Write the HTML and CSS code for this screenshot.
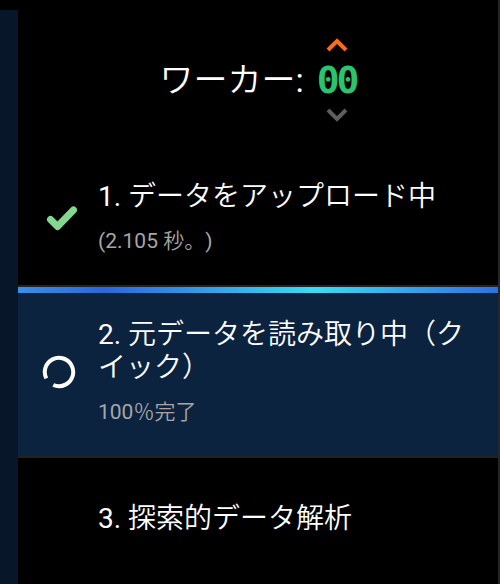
FILE: index.html
```html
<!DOCTYPE html>
<html lang="ja">
<head>
  <meta charset="UTF-8" />
  <meta name="viewport" content="width=device-width, initial-scale=1.0"/>
  <title>ワーカー</title>
  <link rel="stylesheet" href="styles.css">
</head>
<body>
  <div class="app">
    <aside class="rail"></aside>
    <main class="panel">
      <header class="workers">
        <span class="workers-label">ワーカー:</span>
        <div class="counter">
          <svg class="chev chev-up" viewBox="0 0 22 14"><polyline points="2,12 11,3 20,12" /></svg>
          <span class="count">00</span>
          <svg class="chev chev-down" viewBox="0 0 22 14"><polyline points="2,2 11,11 20,2" /></svg>
        </div>
      </header>

      <div class="step step-done">
        <div class="step-icon">
          <svg class="check" viewBox="0 0 32 26"><polyline points="4.5,14.5 11.5,21.5 27.5,5" /></svg>
        </div>
        <div class="step-body">
          <div class="step-title">1. データをアップロード中</div>
          <div class="step-meta">(2.105 秒。)</div>
        </div>
      </div>

      <div class="progress"></div>

      <div class="step step-active">
        <div class="step-icon">
          <svg class="spinner" viewBox="0 0 34 34"><circle cx="17" cy="17" r="14.2" transform="rotate(153 17 17)" /></svg>
        </div>
        <div class="step-body">
          <div class="step-title">2. 元データを読み取り中（クイック）</div>
          <div class="step-meta">100％完了</div>
        </div>
      </div>

      <div class="step step-pending">
        <div class="step-icon"></div>
        <div class="step-body">
          <div class="step-title">3. 探索的データ解析</div>
        </div>
      </div>
    </main>
  </div>
</body>
</html>
```

FILE: styles.css
```css
body {
  margin: 0;
  background: #000;
  color: #fff;
  font-family: Roboto, "Noto Sans CJK JP DemiLight", "Noto Sans CJK JP", sans-serif;
  text-spacing-trim: space-all;
}
.app {
  display: flex;
  height: 100vh;
}
.rail {
  width: 18px;
  margin-top: 10px;
  background: #071628;
}
.panel {
  flex: 1;
  display: flex;
  flex-direction: column;
  border-right: 2px solid #262626;
}

/* worker counter */
.workers {
  display: flex;
  justify-content: center;
  align-items: center;
  gap: 13px;
  padding: 38px 0 30px;
}
.workers-label {
  font-size: 34px;
  line-height: 40px;
}
.counter {
  display: flex;
  flex-direction: column;
  align-items: center;
}
.chev {
  display: block;
  width: 22px;
  height: 14px;
  fill: none;
  stroke-width: 4;
}
.chev-up {
  stroke: #ff6a1c;
}
.chev-down {
  stroke: #5e5e5e;
}
.count {
  margin: 9px 0;
  font-family: "DejaVu Sans Mono", monospace;
  font-weight: bold;
  font-size: 38px;
  line-height: 38px;
  letter-spacing: -3px;
  color: #2bc46e;
}

/* steps */
.step {
  display: flex;
  align-items: center;
  padding: 28px 24px 30px;
  border-bottom: 2px solid #222;
}
.step-icon {
  width: 40px;
  margin-right: 16px;
  display: flex;
  justify-content: center;
  flex-shrink: 0;
}
.step-title {
  font-size: 28px;
  line-height: 33px;
}
.step-meta {
  margin-top: 14px;
  font-size: 21px;
  line-height: 28px;
  color: #a6a6a6;
}
.check {
  width: 32px;
  height: 26px;
  fill: none;
  stroke: #84d78e;
  stroke-width: 7;
  stroke-linecap: round;
  stroke-linejoin: round;
}
.spinner {
  width: 34px;
  height: 34px;
  margin-right: 6px;
  fill: none;
  stroke: #fff;
  stroke-width: 4;
  stroke-dasharray: 79 10.2;
}
.progress {
  height: 6px;
  background: linear-gradient(90deg, #3a90e6 0%, #2c66e0 18%, #3bdcf2 62%, #2f70e4 100%);
}
.step-active {
  background: #0c2340;
  padding-top: 25px;
}
.step-pending {
  padding-top: 44px;
  border-bottom: none;
}
```
